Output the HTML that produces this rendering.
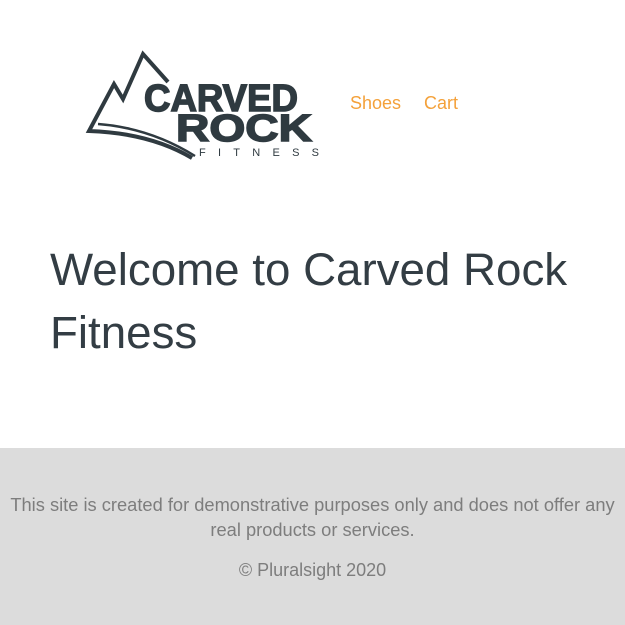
<!DOCTYPE html>
<html><head><style>
body{margin:0;background:#fff;font-family:"Liberation Sans",sans-serif;width:625px;height:625px;overflow:hidden;position:relative}
.nav{position:absolute;top:93px;font-size:18px;color:#f4a13a}
h1{position:absolute;left:50px;top:238px;margin:0;font-weight:normal;font-size:45.7px;line-height:63px;color:#333d44;width:570px}
.foot{position:absolute;left:0;top:448px;width:625px;height:177px;background:#dcdcdc;color:#7d7d7d;font-size:18px;text-align:center}
</style></head><body>
<svg style="position:absolute;left:0;top:0" width="340" height="180">
<g fill="none" stroke="#2f3a40" stroke-width="4" stroke-linejoin="miter">
<path d="M168 82 L143 54 L123 99 L114 84 L89 131 Q150 133 192 158"/>
<path d="M98 124 Q150 128 195 156" stroke-width="2.5"/>
</g>
<text x="144" y="111" font-family="Liberation Sans" font-weight="bold" font-size="38" fill="#2f3a40" stroke="#2f3a40" stroke-width="1.5" textLength="154" lengthAdjust="spacingAndGlyphs">CARVED</text>
<text x="176" y="141" font-family="Liberation Sans" font-weight="bold" font-size="38" fill="#2f3a40" stroke="#2f3a40" stroke-width="1.5" textLength="136" lengthAdjust="spacingAndGlyphs">ROCK</text>
<text x="199" y="156" font-family="Liberation Sans" font-size="11" fill="#2f3a40" textLength="120" lengthAdjust="spacing">FITNESS</text>
</svg>
<div class="nav" style="left:350px">Shoes</div>
<div class="nav" style="left:424px">Cart</div>
<h1>Welcome to Carved Rock Fitness</h1>
<div class="foot">
<div style="position:absolute;top:44px;left:0;width:625px;line-height:25px;font-size:18.3px">This site is created for demonstrative purposes only and does not offer any real products or services.</div>
<div style="position:absolute;top:112px;left:0;width:625px">© Pluralsight 2020</div>
</div>
</body></html>
